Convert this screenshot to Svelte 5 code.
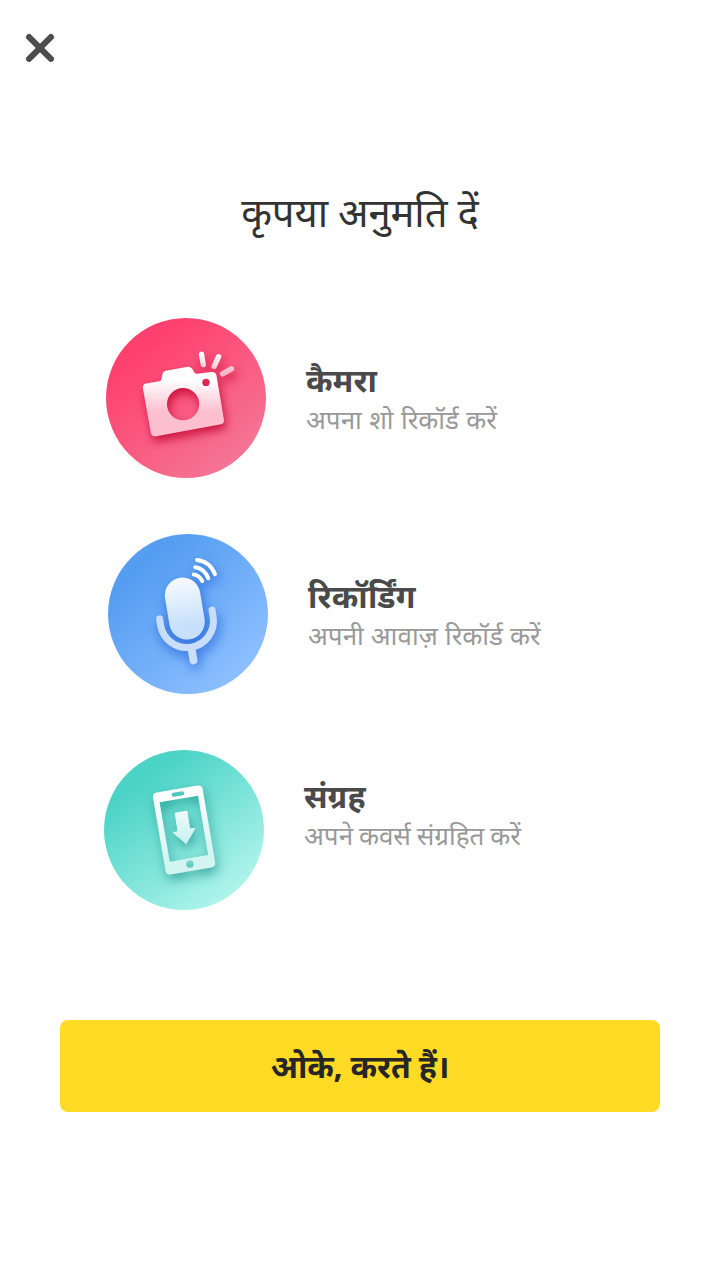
<script>
  const items = [
    { id: 'camera', title: 'कैमरा', text: 'अपना शो रिकॉर्ड करें' },
    { id: 'mic', title: 'रिकॉर्डिंग', text: 'अपनी आवाज़ रिकॉर्ड करें' },
    { id: 'storage', title: 'संग्रह', text: 'अपने कवर्स संग्रहित करें' }
  ];
</script>

<main class="screen">
  <button class="close" aria-label="बंद करें">
    <svg width="32" height="32" viewBox="0 0 32 32">
      <path d="M5.1 5.1 26.9 26.9M26.9 5.1 5.1 26.9" fill="none" stroke="#4d4d4d" stroke-width="6.2" stroke-linecap="round" />
    </svg>
  </button>

  <h1>कृपया अनुमति दें</h1>

  <ul class="permissions">
    {#each items as item (item.id)}
      <li class={item.id}>
        <svg class="badge" width="160" height="160" viewBox="0 0 160 160">
          {#if item.id === 'camera'}
            <defs>
              <linearGradient id="cam-bg" x1="0.22" y1="0.22" x2="0.78" y2="0.92">
                <stop offset="0" stop-color="#ff416f" />
                <stop offset="1" stop-color="#f47594" />
              </linearGradient>
              <linearGradient id="cam-fg" gradientUnits="userSpaceOnUse" x1="0" y1="62" x2="0" y2="94">
                <stop offset="0" stop-color="#fff" />
                <stop offset="1" stop-color="#fbbfcf" />
              </linearGradient>
              <linearGradient id="cam-ray" gradientUnits="userSpaceOnUse" x1="0" y1="36" x2="0" y2="54">
                <stop offset="0" stop-color="#fff" />
                <stop offset="1" stop-color="#fbb5c8" />
              </linearGradient>
            </defs>
            <circle cx="80" cy="80" r="80" fill="url(#cam-bg)" />
            <g class="glyph">
              <path
                fill="url(#cam-fg)"
                fill-rule="evenodd"
                d="M40 65.4 53.5 63.2Q55.1 62.9 55.4 61.3L56.4 56.2Q57 53.3 59.8 52.8L81.6 48.8Q84.4 48.4 86 50.6L88.3 54.2Q89.4 56 91.3 55.7L105.5 54.1Q109.7 53.6 110.5 57.8L118 102.1Q118.4 105.5 115 106.3L50 118.2Q46 118.8 44.9 115L36.9 70.4Q36.3 66.2 40 65.4ZM61 86.2a16.1 16.1 0 1 0 32.2 0a16.1 16.1 0 1 0-32.2 0ZM96.3 64.4a3.7 3.7 0 1 0 7.4 0a3.7 3.7 0 1 0-7.4 0Z"
              />
              <path d="M95.5 36.3 97.3 46.6M112.6 38.7 108.2 48.3M125.4 50.8 116.5 55.8" fill="none" stroke="url(#cam-ray)" stroke-width="5.4" stroke-linecap="round" />
            </g>
          {:else if item.id === 'mic'}
            <defs>
              <linearGradient id="mic-bg" x1="0.22" y1="0.2" x2="0.8" y2="0.85">
                <stop offset="0" stop-color="#559df1" />
                <stop offset="1" stop-color="#8abeff" />
              </linearGradient>
              <linearGradient id="mic-fg" x1="0" y1="0" x2="0" y2="1">
                <stop offset="0" stop-color="#f7fbff" />
                <stop offset="0.8" stop-color="#c6dffb" />
              </linearGradient>
            </defs>
            <circle cx="80" cy="80" r="80" fill="url(#mic-bg)" />
            <g class="glyph" fill="none" stroke-linecap="round">
              <g transform="translate(77.8 80.5) rotate(-9.5)">
                <rect x="-17.8" y="-37.2" width="35.6" height="62.4" rx="17.8" fill="url(#mic-fg)" />
                <path d="M-26.6 0V6.5A26.6 26.6 0 0 0 26.6 6.5V0" stroke="#c8defb" stroke-width="7" />
                <path d="M0 35V46.5" stroke="#c8defb" stroke-width="8" />
              </g>
              <path d="M89 26Q101.5 27 107 40.2M87.2 33.2Q96.5 34.5 100.3 44.3M85.7 40.5Q91 41 94.3 47.1" stroke="#fff" stroke-width="4" />
            </g>
          {:else}
            <defs>
              <linearGradient id="sto-bg" x1="0.22" y1="0.2" x2="0.75" y2="0.9">
                <stop offset="0" stop-color="#4bd3c6" />
                <stop offset="1" stop-color="#acf3ea" />
              </linearGradient>
              <linearGradient id="sto-fg" gradientUnits="userSpaceOnUse" x1="0" y1="-40" x2="0" y2="28">
                <stop offset="0" stop-color="#fff" />
                <stop offset="1" stop-color="#d2f5f1" />
              </linearGradient>
              <linearGradient id="sto-arrow" x1="0" y1="0" x2="0" y2="1">
                <stop offset="0" stop-color="#effbfa" />
                <stop offset="1" stop-color="#c6f1ed" />
              </linearGradient>
            </defs>
            <circle cx="80" cy="80" r="80" fill="url(#sto-bg)" />
            <g class="glyph">
              <path
                transform="translate(80.1 80) rotate(-9.7)"
                fill="url(#sto-fg)"
                fill-rule="evenodd"
                d="M-20.6-41.5H20.6Q25.2-41.5 25.2-37V37Q25.2 41.5 20.6 41.5H-20.6Q-25.2 41.5-25.2 37V-37Q-25.2-41.5-20.6-41.5ZM-19.5-31.5V28.8H19.5V-31.5ZM-4.3-38.6a2.1 2.1 0 0 0 0 4.2H4.3a2.1 2.1 0 0 0 0-4.2ZM-3.7 34.6a3.7 3.7 0 1 0 7.4 0a3.7 3.7 0 1 0-7.4 0Z"
              />
              <path fill="url(#sto-arrow)" stroke="url(#sto-arrow)" stroke-linejoin="round" d="M71.3 63.1 82.9 61.2 85.7 78.9 90.8 78.5 82.2 93.7 69.2 82.6 73.9 81.6Z" />
            </g>
          {/if}
        </svg>
        <div class="copy">
          <h2>{item.title}</h2>
          <p>{item.text}</p>
        </div>
      </li>
    {/each}
  </ul>

  <button class="confirm">ओके, करते हैं।</button>
</main>

<style>
  :global(body) {
    margin: 0;
    background: #fff;
  }
  .screen {
    box-sizing: border-box;
    width: 720px;
    height: 1280px;
    display: flex;
    flex-direction: column;
    overflow: hidden;
    background: #fff;
    font-family: 'Noto Sans', 'Noto Sans Devanagari', sans-serif;
  }
  button {
    border: 0;
    padding: 0;
    font-family: inherit;
  }
  .close {
    width: 32px;
    height: 32px;
    margin: 32px 0 0 24px;
    background: none;
  }
  .close svg {
    display: block;
  }
  h1 {
    margin: 118px 0 0;
    height: 60px;
    line-height: 60px;
    text-align: center;
    font-size: 40px;
    font-weight: 400;
    letter-spacing: -0.15px;
    color: #333;
  }
  .permissions {
    margin: 76px 0 0;
    padding: 0;
    list-style: none;
    display: flex;
    flex-direction: column;
    gap: 56px;
  }
  li {
    display: flex;
    align-items: center;
    gap: 40px;
    height: 160px;
    padding-left: 106px;
  }
  li.mic {
    padding-left: 108px;
  }
  li.storage {
    padding-left: 104px;
  }
  .badge {
    flex: none;
    display: block;
  }
  .glyph {
    filter: drop-shadow(2px 5px 5px rgb(190 0 45 / 0.8));
  }
  .mic .glyph {
    filter: drop-shadow(2px 5px 6px rgb(20 85 210 / 0.75));
  }
  .storage .glyph {
    filter: drop-shadow(2px 5px 6px rgb(10 130 125 / 0.65));
  }
  .copy {
    padding-top: 2px;
  }
  .storage .copy {
    padding-bottom: 32px;
  }
  h2,
  p {
    margin: 0;
    white-space: nowrap;
  }
  h2 {
    height: 40px;
    line-height: 40px;
    font-size: 32px;
    font-weight: 700;
    color: #4a4a4a;
  }
  .mic h2 {
    letter-spacing: 0.2px;
  }
  p {
    height: 38px;
    line-height: 38px;
    font-size: 26px;
    word-spacing: 0.6px;
    color: #999;
  }
  .mic p {
    word-spacing: 0.3px;
  }
  .storage p {
    word-spacing: -0.9px;
  }
  .confirm {
    width: 600px;
    height: 92px;
    margin: 110px auto 0;
    border-radius: 8px;
    background: #ffdb26;
    color: #262626;
    font-size: 32px;
    font-weight: 700;
    line-height: 92px;
    letter-spacing: -0.2px;
  }
</style>
